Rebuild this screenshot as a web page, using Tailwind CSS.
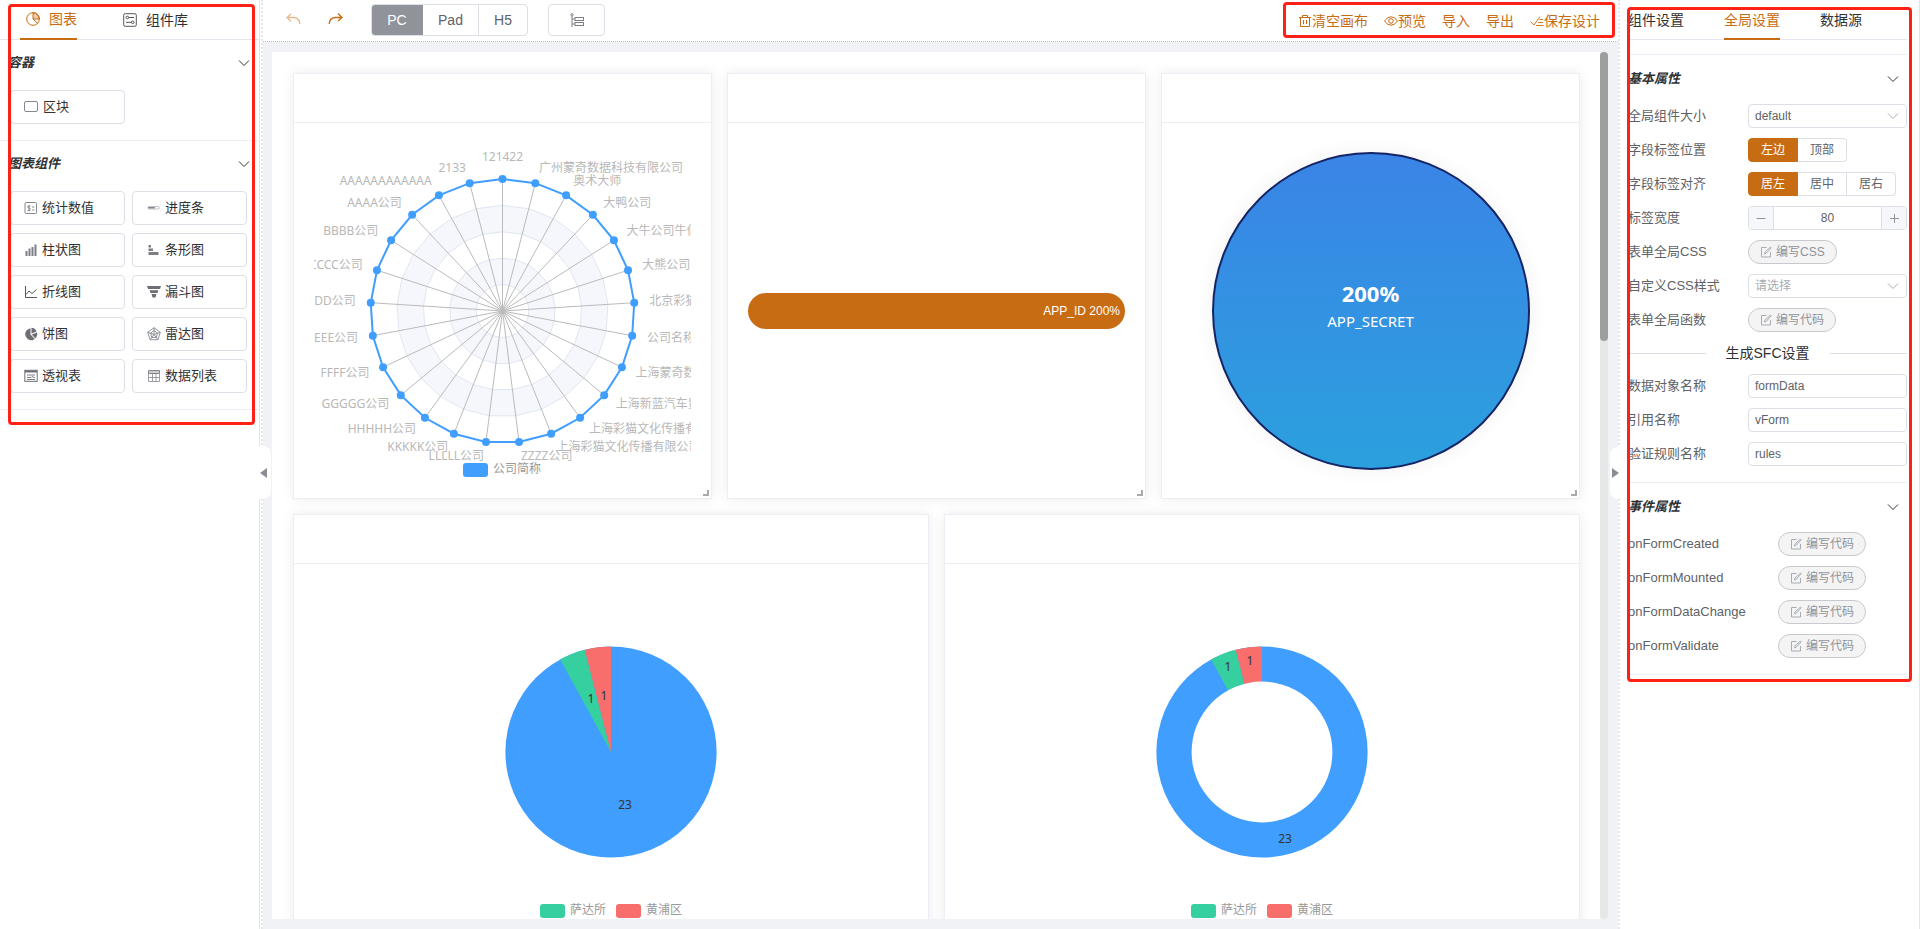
<!DOCTYPE html>
<html lang="zh-CN">
<head>
<meta charset="utf-8">
<title>图表设计器</title>
<script src="https://cdn.jsdelivr.net/npm/@tailwindcss/browser@4"></script>
</head>
<body class="bg-white font-['Liberation_Sans','Noto_Sans_CJK_SC',sans-serif] text-[13px] text-[#303133]">
<svg class="hidden">
  <symbol id="chev" viewBox="0 0 12 12"><path d="M1 3.5 6 8.5 11 3.5" fill="none" stroke="currentColor"/></symbol>
  <symbol id="edit" viewBox="0 0 12 12"><path d="M6.500 1.500H1.500V11H10.500V6M4.500 8 5 6 10.500 1 11.200 1.800 6.200 7.300Z" fill="none" stroke="#a8abb2"/></symbol>
  <symbol id="grip" viewBox="0 0 6 6"><path d="M5 0V5H0" fill="none" stroke="#aaa" stroke-width="2"/></symbol>
</svg>
<div class="flex h-screen overflow-hidden">

  <!-- component palette -->
  <aside class="relative w-[260px] shrink-0 border-r border-[#e0e3ea]">
    <nav class="flex h-10 items-stretch border-b border-[#e4e7ed] pl-5 text-sm">
      <button class="-mb-px flex w-[57px] items-center gap-[9px] border-b-2 border-[#c86c13] pl-[6px] text-[#c86c13]">
        <svg class="size-[14px] shrink-0" viewBox="0 0 14 14" fill="none" stroke="currentColor"><circle cx="7" cy="7" r="6.300"/><path d="M7 .7V7H13.300A6.300 6.300 0 0 0 7 .7Z" fill="currentColor" fill-opacity=".35"/><path d="M7 7 11.500 11.300"/></svg>
        <span class="whitespace-nowrap">图表</span></button>
      <button class="ml-[46px] flex items-center gap-[9px]">
        <svg class="size-[14px]" viewBox="0 0 14 14" fill="none" stroke="#555"><rect x=".7" y=".7" width="12.600" height="12.600" rx="1.500"/><circle cx="4.300" cy="4.500" r="1.300"/><path d="M5.600 4.500H11M3 9.300H8.400"/><circle cx="9.700" cy="9.300" r="1.300"/></svg>
        <span>组件库</span></button>
    </nav>
    <section class="border-b border-[#ebeef5] pb-4">
      <h2 class="flex h-12 items-center justify-between pr-[9px] pb-[2px] pl-2 font-bold italic">容器<svg class="size-[12px]"><use href="#chev"/></svg></h2>
      <div class="grid grid-cols-2 gap-x-[7px] pt-[2px] pr-3 pl-[10px]">
        <button class="flex h-[34px] items-center gap-1 rounded border border-[#dcdfe6] pl-3"><svg class="h-[14px] w-4" viewBox="0 0 16 14"><rect x="1.500" y="1.500" width="13" height="10" rx="1.500" fill="none" stroke="#85888e"/></svg>区块</button>
      </div>
    </section>
    <section class="border-b border-[#ebeef5] pb-4">
      <h2 class="flex h-12 items-center justify-between pr-[9px] pb-[2px] pl-2 font-bold italic">图表组件<svg class="size-[12px]"><use href="#chev"/></svg></h2>
      <div class="grid grid-cols-2 gap-x-[7px] gap-y-2 pt-[2px] pr-3 pl-[10px] text-left">
        <button class="flex h-[34px] items-center gap-1 rounded border border-[#dcdfe6] pl-[13px]"><svg class="size-[14px]" viewBox="0 0 14 14" fill="none" stroke="#85888e"><rect x="1" y="1.500" width="11.500" height="11" rx="1"/><path d="M6.500 5H4V7H6V9.500H3.500M5 4V10.500M8 6H10.500M8 9H10.500" stroke-width=".9"/></svg>统计数值</button>
        <button class="flex h-[34px] items-center gap-1 rounded border border-[#dcdfe6] pl-[14px]"><svg class="size-[14px]" viewBox="0 0 14 14"><rect x="1" y="5.500" width="11.500" height="2.500" rx="1" fill="none" stroke="#b5b8bd" stroke-width=".8"/><rect x="1" y="6" width="7" height="1.500" fill="#85888e"/></svg>进度条</button>
        <button class="flex h-[34px] items-center gap-1 rounded border border-[#dcdfe6] pl-[13px]"><svg class="size-[14px]" viewBox="0 0 14 14" fill="#7d7f85"><path d="M1.500 8H3.500V13H1.500ZM4.500 5.500H6.500V13H4.500ZM7.500 4H9.500V13H7.500ZM10.500 1.500H12.500V13H10.500Z"/></svg>柱状图</button>
        <button class="flex h-[34px] items-center gap-1 rounded border border-[#dcdfe6] pl-[14px]"><svg class="size-[14px]" viewBox="0 0 14 14" fill="#7d7f85"><path d="M1.500 2H4V4.500H1.500ZM1.500 5.500H6V8H1.500ZM1.500 9H11.500V12H1.500Z"/></svg>条形图</button>
        <button class="flex h-[34px] items-center gap-1 rounded border border-[#dcdfe6] pl-[13px]"><svg class="size-[14px]" viewBox="0 0 14 14" fill="none" stroke="#55585e"><path d="M1.500 1V12.500H13M2 9.500 5 6 8 8.500 12.500 4.500"/></svg>折线图</button>
        <button class="flex h-[34px] items-center gap-1 rounded border border-[#dcdfe6] pl-[14px]"><svg class="size-[14px]" viewBox="0 0 14 14" fill="#6d6f75"><path d="M0 1H14L13 4H1ZM2.500 5.200H11.500L10.500 8H3.500ZM4.500 9H9.500L8.500 12.500H5.500Z"/></svg>漏斗图</button>
        <button class="flex h-[34px] items-center gap-1 rounded border border-[#dcdfe6] pl-[13px]"><svg class="size-[14px]" viewBox="0 0 14 14" fill="#6d6f75"><path d="M6.500 1.200V7.500L10.800 12A6 6 0 1 1 6.500 1.200ZM7.500 .8A6 6 0 0 1 12.600 4.500L7.500 6.500ZM7.700 7.500 13 5.400A6 6 0 0 1 11.500 11.400Z"/></svg>饼图</button>
        <button class="flex h-[34px] items-center gap-1 rounded border border-[#dcdfe6] pl-[14px]"><svg class="size-[14px]" viewBox="0 0 14 14" fill="none" stroke="#85888e" stroke-width=".9"><path d="M7 .7 13.300 5.300 10.900 12.700H3.100L.7 5.300ZM7 3.500 10.500 6.200 9.200 10.500H4.800L3.500 6.200ZM7 .7V7.500L13.300 5.300M7 7.500 10.900 12.700M7 7.500 3.100 12.700M7 7.500 .7 5.300"/></svg>雷达图</button>
        <button class="flex h-[34px] items-center gap-1 rounded border border-[#dcdfe6] pl-[13px]"><svg class="size-[14px]" viewBox="0 0 14 14" fill="none" stroke="#6d6f75"><rect x=".8" y="1.300" width="12.400" height="11"/><path d="M1 2.500H13" stroke-width="2"/><path d="M3 6H11M3 8.500H7L8 7.500 11 9M3 10.500H11" stroke-width=".9"/></svg>透视表</button>
        <button class="flex h-[34px] items-center gap-1 rounded border border-[#dcdfe6] pl-[14px]"><svg class="size-[14px]" viewBox="0 0 14 14" fill="none" stroke="#85888e"><path d="M1.500 1.500H12.500V4.500H1.500Z" fill="#ccc"/><path d="M1.500 4.500V12.500H12.500V4.500M1.500 8.500H12.500M5.500 4.500V12.500M9 4.500V12.500" stroke-width=".8"/></svg>数据列表</button>
      </div>
    </section>
    <div class="pointer-events-none absolute top-1 left-2 h-[421px] w-[247px] rounded border-[3px] border-[#ff2116]"></div>
    <button aria-label="收起左侧" class="absolute top-[446px] left-[258px] z-10 flex h-[53px] w-[13px] items-center rounded-r-lg bg-white pl-px"><svg class="h-3 w-2" viewBox="0 0 8 12"><path d="M8 1V11L1 6Z" fill="#8a8d93"/></svg></button>
  </aside>

  <!-- design surface -->
  <main class="relative ml-px flex min-w-0 flex-1 flex-col border-x-2 border-dotted border-[#e4e7ed]">
    <header class="flex h-[42px] shrink-0 items-start border-b border-dotted border-[#bbb] pl-[23px]">
      <button aria-label="撤销" class="mt-3 text-[#e6b98e]"><svg class="h-[14px] w-[15px]" viewBox="0 0 15 14" fill="none" stroke="currentColor" stroke-width="1.300"><path d="M5 2 1 5.500 5 9.500M1 5.500H8Q13.500 6 13.800 12"/></svg></button>
      <button aria-label="重做" class="mt-3 ml-[27px] text-[#c86c13]"><svg class="h-[14px] w-[15px]" viewBox="0 0 15 14" fill="none" stroke="currentColor" stroke-width="1.300"><path d="M10 1.500 14 5.500 10 9M14 5.500H7Q1.500 6 1.200 12"/></svg></button>
      <div class="mt-1 ml-7 flex h-8 items-stretch overflow-hidden rounded border border-[#dcdfe6] text-sm text-[#606266]">
        <button class="-my-px -ml-px w-[52px] bg-[#909399] text-white">PC</button>
        <button class="w-[56px] border-r border-[#dcdfe6]">Pad</button>
        <button class="w-[48px]">H5</button>
      </div>
      <button aria-label="层级" class="mt-1 ml-5 flex h-8 w-[57px] items-center justify-center rounded border border-[#dcdfe6]"><svg class="size-[14px]" viewBox="0 0 14 14" fill="none" stroke="#7d7f85"><circle cx="2" cy="1.800" r="1.200"/><path d="M2 3V14M2 6H5M2 11H5"/><rect x="5" y="4.500" width="8.500" height="3"/><rect x="5" y="9.500" width="8.500" height="3"/></svg></button>
      <div class="mt-[2px] mr-[3px] ml-auto flex h-[36px] items-center gap-4 rounded border-[3px] border-[#ff2116] pt-[2px] pr-[12px] pl-[12px] text-sm whitespace-nowrap text-[#c86c13]">
        <button class="flex items-center"><svg class="size-[14px]" viewBox="0 0 14 14" fill="none" stroke="currentColor"><path d="M1 3.500H13M4.500 3.500V1.500H9.500V3.500M2.500 3.500V12.500H11.500V3.500M5.500 6V10M8.500 6V10"/></svg>清空画布</button>
        <button class="flex items-center"><svg class="size-[14px]" viewBox="0 0 14 14" fill="none" stroke="currentColor"><path d="M.6 7Q3 2.800 7 2.800T13.400 7Q11 11.200 7 11.200T.6 7Z"/><circle cx="7" cy="7" r="2.300"/></svg>预览</button>
        <button>导入</button>
        <button>导出</button>
        <button class="flex items-center"><svg class="size-[14px]" viewBox="0 0 14 14" fill="none" stroke="currentColor"><path d="M.6 7.500 4 11 10 2.500M9.500 5.500H13M8 8.500H13M6 11.500H13.500" stroke-width=".9"/></svg>保存设计</button>
      </div>
    </header>

    <div class="flex min-h-0 flex-1 bg-[#f0f2f5] py-[10px] pr-[10px] pl-[9px]">
      <div class="flex min-w-0 flex-1 flex-col gap-[15px] overflow-hidden bg-white py-[21px] pr-5 pl-[21px]">
        <div class="grid shrink-0 grid-cols-3 gap-[15px]">
          <article class="relative border border-[#ebeef5] shadow-[0_0_12px_rgba(0,0,0,0.08)]">
            <div class="h-[49px] border-b border-[#ebeef5]"></div>
            <div class="px-5 pt-5 pb-[19px]"><svg id="radar" class="block h-[336px] w-full font-['Noto_Sans','Noto_Sans_CJK_SC',sans-serif] text-xs" viewBox="0 0 377 336"></svg></div>
            <svg class="absolute right-[2px] bottom-[2px] size-[6px]"><use href="#grip"/></svg>
          </article>
          <article class="relative border border-[#ebeef5] shadow-[0_0_12px_rgba(0,0,0,0.08)]">
            <div class="h-[49px] border-b border-[#ebeef5]"></div>
            <div class="flex h-[375px] items-center px-5">
              <div class="flex h-9 w-full items-center justify-end rounded-full bg-[#c86c13] pr-[5px] text-xs text-white">APP_ID 200%</div>
            </div>
            <svg class="absolute right-[2px] bottom-[2px] size-[6px]"><use href="#grip"/></svg>
          </article>
          <article class="relative border border-[#ebeef5] shadow-[0_0_12px_rgba(0,0,0,0.08)]">
            <div class="h-[49px] border-b border-[#ebeef5]"></div>
            <div class="flex h-[375px] items-center justify-center font-['Noto_Sans',sans-serif] text-white">
              <div class="flex size-[318px] flex-col items-center justify-center rounded-full border-2 border-[#142465] bg-linear-to-b from-[#3a84e6] to-[#2ba0de] pb-2 shadow-[0_0_20px_rgba(0,0,0,0.06)]">
                <strong class="text-[22px] leading-7">200%</strong>
                <span class="text-[15px] leading-7">APP_SECRET</span>
              </div>
            </div>
            <svg class="absolute right-[2px] bottom-[2px] size-[6px]"><use href="#grip"/></svg>
          </article>
        </div>
        <div class="grid shrink-0 grid-cols-2 gap-[15px]">
          <article class="border border-[#ebeef5] shadow-[0_0_12px_rgba(0,0,0,0.08)]">
            <div class="h-[49px] border-b border-[#ebeef5]"></div>
            <div class="p-5"><svg class="block h-[336px] w-full font-['Noto_Sans','Noto_Sans_CJK_SC',sans-serif] text-xs" viewBox="-297 -168 594 336">
              <circle r="105.600" fill="#409eff"/>
              <path d="M0 0-50.900-92.500A105.600 105.600 0 0 1-26.300-102.300Z" fill="#36cf9f"/>
              <path d="M0 0-26.300-102.300A105.600 105.600 0 0 1 0-105.600Z" fill="#f76e6c"/>
              <g fill="#333" text-anchor="middle"><text x="14" y="57">23</text><text x="-20" y="-49">1</text><text x="-7" y="-52">1</text></g>
              <rect x="-71" y="152" width="25" height="14" rx="3" fill="#36cf9f"/><rect x="5" y="152" width="25" height="14" rx="3" fill="#f76e6c"/>
              <g fill="#999"><text x="-41" y="162">萨达所</text><text x="35" y="162">黄浦区</text></g>
            </svg></div>
          </article>
          <article class="border border-[#ebeef5] shadow-[0_0_12px_rgba(0,0,0,0.08)]">
            <div class="h-[49px] border-b border-[#ebeef5]"></div>
            <div class="p-5"><svg class="block h-[336px] w-full font-['Noto_Sans','Noto_Sans_CJK_SC',sans-serif] text-xs" viewBox="-297 -168 594 336">
              <circle r="105.600" fill="#409eff"/>
              <path d="M0 0-50.900-92.500A105.600 105.600 0 0 1-26.300-102.300Z" fill="#36cf9f"/>
              <path d="M0 0-26.300-102.300A105.600 105.600 0 0 1 0-105.600Z" fill="#f76e6c"/>
              <circle r="70.400" fill="#fff"/>
              <g fill="#333" text-anchor="middle"><text x="23" y="91">23</text><text x="-34" y="-81">1</text><text x="-12" y="-87">1</text></g>
              <rect x="-71" y="152" width="25" height="14" rx="3" fill="#36cf9f"/><rect x="5" y="152" width="25" height="14" rx="3" fill="#f76e6c"/>
              <g fill="#999"><text x="-41" y="162">萨达所</text><text x="35" y="162">黄浦区</text></g>
            </svg></div>
          </article>
        </div>
      </div>
      <div class="w-2 shrink-0 rounded-full bg-[#e6e8e7]"><div class="h-1/3 rounded-full bg-[#9b9f9e]"></div></div>
    </div>
    <button aria-label="收起右侧" class="absolute top-[447px] -right-[2px] z-10 flex h-[52px] w-[10px] items-center justify-end rounded-l-lg bg-white"><svg class="h-3 w-2" viewBox="0 0 8 12"><path d="M0 1V11L7 6Z" fill="#8a8d93"/></svg></button>
  </main>

  <!-- settings -->
  <aside class="relative w-[300px] shrink-0 border-r border-[#e4e7ed] pr-3 pl-2 text-[#606266]">
    <nav class="flex h-10 gap-10 border-b border-[#e4e7ed] text-sm whitespace-nowrap text-[#303133]">
      <button>组件设置</button>
      <button class="-mb-px border-b-2 border-[#c86c13] pt-px text-[#c86c13]">全局设置</button>
      <button>数据源</button>
    </nav>
    <section class="mt-[14px] border-t border-[#ebeef5] pb-[6px]">
      <h2 class="flex h-[49px] items-center justify-between pr-1 pb-[2px] font-bold text-[#303133] italic">基本属性<svg class="mr-1 size-[12px]"><use href="#chev"/></svg></h2>
      <div class="mb-[10px] flex h-6 items-center"><label for="size" class="w-[120px] shrink-0">全局组件大小</label><div class="relative flex-1"><select id="size" class="block h-6 w-full appearance-none rounded border border-[#dcdfe6] bg-white px-[6px] text-xs"><option>default</option></select><svg class="pointer-events-none absolute top-[6px] right-2 size-[12px] text-[#a8abb2]"><use href="#chev"/></svg></div></div>
      <fieldset class="mb-[10px] flex h-6 items-center"><legend class="float-left w-[120px] shrink-0">字段标签位置</legend>
        <div class="flex h-6 text-xs leading-[22px]">
          <label class="w-[50px] rounded-l border border-[#c86c13] bg-[#c86c13] text-center text-white"><input type="radio" name="pos" checked class="sr-only">左边</label>
          <label class="w-[49px] rounded-r border border-l-0 border-[#dcdfe6] text-center"><input type="radio" name="pos" class="sr-only">顶部</label>
        </div></fieldset>
      <fieldset class="mb-[10px] flex h-6 items-center"><legend class="float-left w-[120px] shrink-0">字段标签对齐</legend>
        <div class="flex h-6 text-xs leading-[22px]">
          <label class="w-[50px] rounded-l border border-[#c86c13] bg-[#c86c13] text-center text-white"><input type="radio" name="align" checked class="sr-only">居左</label>
          <label class="w-[49px] border border-l-0 border-[#dcdfe6] text-center"><input type="radio" name="align" class="sr-only">居中</label>
          <label class="w-[49px] rounded-r border border-l-0 border-[#dcdfe6] text-center"><input type="radio" name="align" class="sr-only">居右</label>
        </div></fieldset>
      <div class="mb-[10px] flex h-6 items-center"><label for="lw" class="w-[120px] shrink-0">标签宽度</label>
        <div class="flex h-6 min-w-0 flex-1 overflow-hidden rounded border border-[#dcdfe6] text-[#909399]">
          <button aria-label="减少" class="flex w-[25px] shrink-0 items-center justify-center border-r border-[#dcdfe6] bg-[#f5f7fa]"><svg class="size-[10px]" viewBox="0 0 10 10"><path d="M.5 5.500H9.500" stroke="currentColor"/></svg></button>
          <input id="lw" value="80" class="w-0 min-w-0 flex-1 text-center text-xs text-[#606266]">
          <button aria-label="增加" class="flex w-[25px] shrink-0 items-center justify-center border-l border-[#dcdfe6] bg-[#f5f7fa]"><svg class="size-[10px]" viewBox="0 0 10 10"><path d="M1 5.500H10M5.500 1V10" stroke="currentColor"/></svg></button>
        </div></div>
      <div class="mb-[10px] flex h-6 items-center"><span class="w-[120px] shrink-0">表单全局CSS</span><button class="flex h-6 items-center gap-1 rounded-full border border-[#c8c9cc] bg-[#f4f4f5] px-[11px] text-xs text-[#909399]"><svg class="size-[12px]"><use href="#edit"/></svg>编写CSS</button></div>
      <div class="mb-[10px] flex h-6 items-center"><label for="css" class="w-[120px] shrink-0">自定义CSS样式</label><div class="relative flex-1"><select id="css" class="block h-6 w-full appearance-none rounded border border-[#dcdfe6] bg-white px-[6px] text-xs text-[#a8abb2]"><option>请选择</option></select><svg class="pointer-events-none absolute top-[6px] right-2 size-[12px] text-[#a8abb2]"><use href="#chev"/></svg></div></div>
      <div class="mb-[10px] flex h-6 items-center"><span class="w-[120px] shrink-0">表单全局函数</span><button class="flex h-6 items-center gap-1 rounded-full border border-[#c8c9cc] bg-[#f4f4f5] px-[11px] text-xs text-[#909399]"><svg class="size-[12px]"><use href="#edit"/></svg>编写代码</button></div>
      <div class="mb-[10px] flex h-[22px] items-center gap-5 text-sm text-[#303133]"><span class="h-px flex-1 bg-[#dcdfe6]"></span>生成SFC设置<span class="h-px flex-1 bg-[#dcdfe6]"></span></div>
      <div class="mb-[10px] flex h-6 items-center"><label for="fd" class="w-[120px] shrink-0">数据对象名称</label><input id="fd" value="formData" class="h-6 w-0 min-w-0 flex-1 rounded border border-[#dcdfe6] px-[6px] text-xs"></div>
      <div class="mb-[10px] flex h-6 items-center"><label for="vf" class="w-[120px] shrink-0">引用名称</label><input id="vf" value="vForm" class="h-6 w-0 min-w-0 flex-1 rounded border border-[#dcdfe6] px-[6px] text-xs"></div>
      <div class="mb-[10px] flex h-6 items-center"><label for="ru" class="w-[120px] shrink-0">验证规则名称</label><input id="ru" value="rules" class="h-6 w-0 min-w-0 flex-1 rounded border border-[#dcdfe6] px-[6px] text-xs"></div>
    </section>
    <section class="border-y border-[#ebeef5] pb-[6px]">
      <h2 class="flex h-[49px] items-center justify-between pr-1 pb-[2px] font-bold text-[#303133] italic">事件属性<svg class="mr-1 size-[12px]"><use href="#chev"/></svg></h2>
      <div class="mb-[10px] flex h-6 items-center"><span class="w-[150px] shrink-0">onFormCreated</span><button class="flex h-6 items-center gap-1 rounded-full border border-[#c8c9cc] bg-[#f4f4f5] px-[11px] text-xs text-[#909399]"><svg class="size-[12px]"><use href="#edit"/></svg>编写代码</button></div>
      <div class="mb-[10px] flex h-6 items-center"><span class="w-[150px] shrink-0">onFormMounted</span><button class="flex h-6 items-center gap-1 rounded-full border border-[#c8c9cc] bg-[#f4f4f5] px-[11px] text-xs text-[#909399]"><svg class="size-[12px]"><use href="#edit"/></svg>编写代码</button></div>
      <div class="mb-[10px] flex h-6 items-center"><span class="w-[150px] shrink-0">onFormDataChange</span><button class="flex h-6 items-center gap-1 rounded-full border border-[#c8c9cc] bg-[#f4f4f5] px-[11px] text-xs text-[#909399]"><svg class="size-[12px]"><use href="#edit"/></svg>编写代码</button></div>
      <div class="mb-[10px] flex h-6 items-center"><span class="w-[150px] shrink-0">onFormValidate</span><button class="flex h-6 items-center gap-1 rounded-full border border-[#c8c9cc] bg-[#f4f4f5] px-[11px] text-xs text-[#909399]"><svg class="size-[12px]"><use href="#edit"/></svg>编写代码</button></div>
    </section>
    <div class="pointer-events-none absolute top-[7px] right-[7px] left-[7px] h-[675px] rounded border-[3px] border-[#ff2116]"></div>
  </aside>
</div>
<script>
// Radar chart: one axis per company, clockwise from the top
const names = ['121422','广州蒙奇数据科技有限公司','奥术大师','大鸭公司','大牛公司牛伯','大熊公司','北京彩猫','公司名称','上海蒙奇数据','上海新蓝汽车贸易','上海彩猫文化传播有限','上海彩猫文化传播有限公司','ZZZZ公司','LLLLL公司','KKKKK公司','HHHHH公司','GGGGG公司','FFFF公司','EEE公司','DDDD公司','CCCC公司','BBBB公司','AAAA公司','AAAAAAAAAAAA','2133'];
const cx = 188.5, cy = 168, R = 132;
const at = (i, r) => { const a = i * 2 * Math.PI / names.length; return [cx + r * Math.sin(a), cy - r * Math.cos(a)]; };
const ring = r => names.map((_, i) => at(i, r).join()).join(' ');
let s = '';
[1, .8, .6, .4, .2].forEach((k, n) => s += `<polygon points="${ring(R * k)}" fill="${n % 2 ? '#f5f7fc' : '#fff'}" stroke="#e0e6f1"/>`);
names.forEach((_, i) => { const [x, y] = at(i, R); s += `<path d="M${cx} ${cy}L${x} ${y}" stroke="#bbb"/>`; });
s += `<polygon points="${ring(R)}" fill="none" stroke="#409eff" stroke-width="2"/>`;
names.forEach((name, i) => {
  const [x, y] = at(i, R), [lx, ly] = at(i, R + 15);
  s += `<circle cx="${x}" cy="${y}" r="4" fill="#409eff"/>`;
  s += `<text x="${lx}" y="${i ? ly + 3 : ly - 3}" fill="#b8b8b8" text-anchor="${i === 0 ? 'middle' : i < 13 ? 'start' : 'end'}">${name}</text>`;
});
s += '<rect x="149" y="320" width="25" height="14" rx="3" fill="#409eff"/><text x="179" y="330" fill="#999">公司简称</text>';
document.getElementById('radar').innerHTML = s;
</script>
</body>
</html>
